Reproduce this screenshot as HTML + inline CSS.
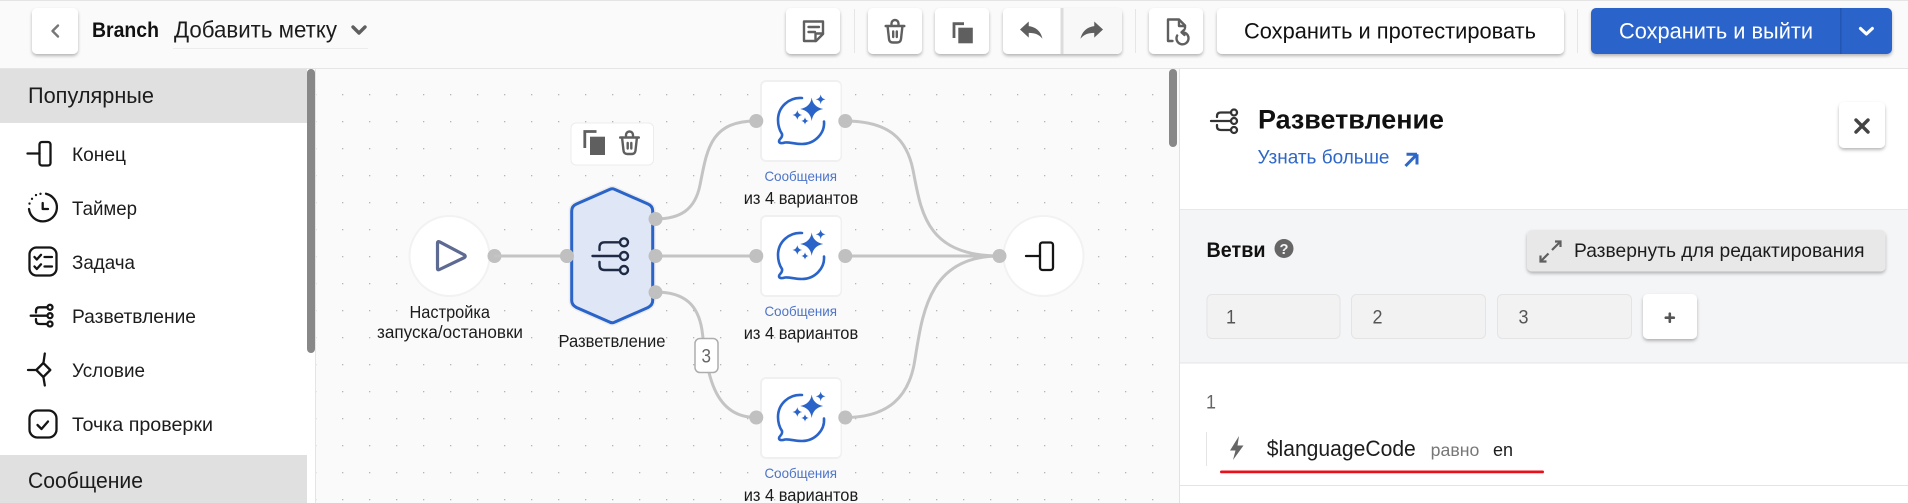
<!DOCTYPE html>
<html lang="ru"><head><meta charset="utf-8"><title>Branch</title>
<style>
html,body{margin:0;padding:0;background:#fff;width:1908px;height:503px;overflow:hidden}
svg{display:block}
text{font-family:"Liberation Sans",sans-serif;fill:#1c1c1c}
.b{font-weight:700}
.ic{fill:none;stroke:#5f5f5f;stroke-width:2.4;stroke-linecap:round;stroke-linejoin:round}
.bk{fill:none;stroke:#151515;stroke-width:2.3;stroke-linecap:round;stroke-linejoin:round}
.wire{fill:none;stroke:#c4c4c4;stroke-width:3}
.port{fill:#c0c0c0}
</style></head><body>
<svg xmlns="http://www.w3.org/2000/svg" width="1908" height="503" viewBox="0 0 1908 503">
<defs>
<pattern id="dots" x="342" y="94" width="27" height="27" patternUnits="userSpaceOnUse"><rect x="0" y="0" width="1.3" height="1.3" fill="#b5b5b5"/></pattern>
<filter id="sh" x="-20%" y="-20%" width="140%" height="150%"><feDropShadow dx="0" dy="2" stdDeviation="1.6" flood-color="#000" flood-opacity=".28"/></filter>
<g id="trash" class="ic"><path d="M6.5 5V4a3.5 3.5 0 0 1 7 0V5"/><path d="M.8 6.5H19.2" stroke-width="2.6"/><path d="M2.6 7L4 19.5Q4.4 23 8 23H12Q15.6 23 16 19.5L17.4 7"/><path d="M8.2 12V17.5M11.8 12V17.5"/></g>
<g id="chat">
<path d="M802 98C789 97 778 107 778 120C778 126 780 131 782 134C783 138 779 139 779 141C779 143.5 782 143.5 785 142.5C790 142 794 144 802 144C815 144 825 133 824 121.5" fill="none" stroke="#2b64c8" stroke-width="2.6" stroke-linecap="round" stroke-linejoin="round"/>
<path d="M811.7 97.5Q813 107 823.2 109Q813 111 811.7 121Q810.4 111 800.2 109Q810.4 107 811.7 97.5Z" fill="#2b64c8"/>
<path d="M820.7 94.5Q821.3 98.7 825.5 99.3Q821.3 100 820.7 104.2Q820 100 815.8 99.3Q820 98.7 820.7 94.5Z" fill="#2b64c8"/>
<path d="M797.3 110.2Q798 114.3 802.2 115Q798 115.7 797.3 119.8Q796.6 115.7 792.4 115Q796.6 114.3 797.3 110.2Z" fill="#2b64c8"/>
<path d="M805 117.3Q805.5 120.5 808.7 121Q805.5 121.5 805 124.7Q804.5 121.5 801.3 121Q804.5 120.5 805 117.3Z" fill="#2b64c8"/>
</g>
</defs>

<!-- base -->
<rect x="0" y="0" width="1908" height="503" fill="#fff"/>
<!-- header -->
<rect x="0" y="0" width="1908" height="68" fill="#fafafa"/>
<rect x="0" y="0" width="1908" height="1" fill="#e4e4e4"/>
<rect x="0" y="68" width="1908" height="1" fill="#e5e5e5"/>

<rect x="32" y="8" width="46" height="46" rx="5" fill="#fff" filter="url(#sh)"/>
<path d="M58 25.500L52.500 31L58 36.500" fill="none" stroke="#777" stroke-width="2.400" stroke-linecap="round" stroke-linejoin="round"/>
<text class="b" x="92" y="37" font-size="21.500" textLength="67" lengthAdjust="spacingAndGlyphs" style="fill:#111">Branch</text>
<text x="174" y="37.500" font-size="23" textLength="163" lengthAdjust="spacingAndGlyphs">Добавить метку</text>
<path d="M353 27L359 33L365 27" fill="none" stroke="#5f5f5f" stroke-width="3.400" stroke-linecap="round" stroke-linejoin="round"/>
<rect x="173" y="48" width="195" height="1" fill="#ececec"/>

<!-- toolbar -->
<rect x="786" y="8" width="54" height="46" rx="5" fill="#fff" filter="url(#sh)"/>
<path d="M804 21.500H823V34L816 41H804Z" class="ic" stroke-width="2.800"/>
<path d="M815.500 41V33.500H823" class="ic" stroke-width="2"/>
<path d="M808.500 27H819M808.500 32H815" class="ic"/>
<rect x="854" y="9" width="1" height="44" fill="#e6e6e6"/>
<rect x="868" y="8" width="54" height="46" rx="5" fill="#fff" filter="url(#sh)"/>
<use href="#trash" x="885" y="19.500"/>
<rect x="935" y="8" width="54" height="46" rx="5" fill="#fff" filter="url(#sh)"/>
<path d="M954 38V23.700H964" fill="none" stroke="#5f5f5f" stroke-width="2.800"/>
<rect x="958.300" y="27.700" width="14.500" height="15.600" fill="#5f5f5f"/>
<rect x="1003" y="8" width="119" height="46" rx="5" fill="#fff" filter="url(#sh)"/>
<path d="M1062 8H1117A5 5 0 0 1 1122 13V49A5 5 0 0 1 1117 54H1062Z" fill="#f8f8f8"/>
<rect x="1060.500" y="8" width="3" height="46" fill="#dcdcdc"/>
<path transform="translate(1016.250 15.750) scale(1.25 1.150)" d="M10 9V5l-7 7 7 7v-4.100c5 0 8.500 1.600 11 5.100-1-5-4-10-11-11z" fill="#5f5f5f"/>
<path transform="translate(1106.750 15.750) scale(-1.250 1.150)" d="M10 9V5l-7 7 7 7v-4.100c5 0 8.500 1.600 11 5.100-1-5-4-10-11-11z" fill="#5f5f5f"/>
<rect x="1135" y="9" width="1" height="44" fill="#e6e6e6"/>
<rect x="1149" y="8" width="54" height="46" rx="5" fill="#fff" filter="url(#sh)"/>
<path d="M1172.500 41H1168V19.500H1179L1185 25.500V28" class="ic" stroke-width="2.800"/>
<path d="M1179 20V26H1185" class="ic" stroke-width="1.800"/>
<path d="M1177.200 35.500A6 6 0 1 0 1182.700 32.300" class="ic" stroke-width="2.300"/>
<path d="M1184.500 29.500L1181.500 32.300L1184.500 35" class="ic" stroke-width="2"/>
<rect x="1217" y="8" width="347" height="46" rx="5" fill="#fff" filter="url(#sh)"/>
<text x="1244" y="38.500" font-size="22.500" textLength="292" lengthAdjust="spacingAndGlyphs" style="fill:#111">Сохранить и протестировать</text>
<rect x="1577" y="9" width="1" height="44" fill="#e6e6e6"/>
<rect x="1591" y="8" width="301" height="46" rx="5" fill="#2a63c9" filter="url(#sh)"/>
<rect x="1840" y="8" width="1.500" height="46" fill="#2356b2"/>
<text x="1619" y="38.500" font-size="22.500" textLength="194" lengthAdjust="spacingAndGlyphs" style="fill:#fff">Сохранить и выйти</text>
<path d="M1860.500 28.500L1866.400 34L1872.300 28.500" fill="none" stroke="#fff" stroke-width="3.200" stroke-linecap="round" stroke-linejoin="round"/>

<!-- sidebar -->
<rect x="0" y="69" width="307" height="54" fill="#e0e0e0"/>
<text x="28" y="103" font-size="22" textLength="126" lengthAdjust="spacingAndGlyphs">Популярные</text>
<rect x="307" y="69" width="8" height="284" rx="4" fill="#888"/>
<rect x="315" y="69" width="1" height="434" fill="#e5e5e5"/>

<path d="M27.500 153.500H39.500" class="bk"/><rect x="39.500" y="142" width="11" height="23.500" rx="2.500" class="bk"/>
<text x="72" y="161" font-size="19.500" textLength="54" lengthAdjust="spacingAndGlyphs">Конец</text>

<path d="M46 193.700A14 14 0 1 1 29 209" class="bk"/>
<path d="M29.500 203.500V203.600M32 198.800V198.900M36 195V195.100M40.500 193.800V193.900" class="bk"/>
<path d="M42.700 203V209H48" class="bk"/>
<text x="72" y="215" font-size="19.500" textLength="65" lengthAdjust="spacingAndGlyphs">Таймер</text>

<rect x="29.500" y="247.500" width="27" height="28" rx="7" class="bk"/>
<path d="M34.500 257L36.800 259.500L41 254.800M34.500 266.500L36.800 269L41 264.300M44.500 257H52M44.500 266.500H52" class="bk" stroke-width="2"/>
<text x="72" y="269" font-size="19.500" textLength="63" lengthAdjust="spacingAndGlyphs">Задача</text>

<circle cx="50" cy="307.300" r="2.500" class="bk" stroke-width="1.500"/><circle cx="50" cy="315.700" r="2.500" class="bk" stroke-width="1.500"/><circle cx="50" cy="324" r="2.500" class="bk" stroke-width="1.500"/>
<path d="M30.700 315.700H47.500M47.500 307.300H39.500Q36 307.300 36 311V312.500M36 319V320.500Q36 324 39.500 324H47.500" class="bk" stroke-width="1.500"/>
<text x="72" y="323" font-size="19.500" textLength="124" lengthAdjust="spacingAndGlyphs">Разветвление</text>

<path d="M43.300 363L50.300 370L43.300 377L36.300 370Z" class="bk"/>
<path d="M28 370H35.500M44.800 353.500L43.500 362.500M43.500 377.500L44.800 385.500" class="bk"/>
<text x="72" y="377" font-size="19.500" textLength="73" lengthAdjust="spacingAndGlyphs">Условие</text>

<rect x="29.500" y="410.500" width="27" height="27" rx="8" class="bk"/>
<path d="M37.500 425L41.500 429L48 421.500" class="bk"/>
<text x="72" y="431" font-size="19.500" textLength="141" lengthAdjust="spacingAndGlyphs">Точка проверки</text>

<rect x="0" y="455" width="307" height="48" fill="#e0e0e0"/>
<text x="28" y="488" font-size="22" textLength="115" lengthAdjust="spacingAndGlyphs">Сообщение</text>

<!-- canvas -->
<rect x="316" y="69" width="863" height="434" fill="#fafafa"/>
<rect x="316" y="69" width="850" height="434" fill="url(#dots)"/>
<rect x="1169" y="69" width="8" height="78" rx="4" fill="#888"/>

<!-- wires -->
<path class="wire" d="M655 219C680 219 695 210 700 185C707 150 710 121 756 121"/>
<path class="wire" d="M655 256H756"/>
<path class="wire" d="M655 292C685 292 698 305 702 330C707 370 712 417.500 756 417.500"/>
<path class="wire" d="M845 121C890 121 907 140 913 170C921 210 925 256 999 256"/>
<path class="wire" d="M845 256H999"/>
<path class="wire" d="M845 417.500C890 417.500 908 395 914 365C922 320 925 256 999 256"/>

<!-- start -->
<circle cx="449.500" cy="256" r="41" fill="#f2f2f2"/>
<circle cx="449.500" cy="256" r="39" fill="#fff"/>
<path d="M437.500 243V268.500Q437.500 270.500 439.500 269.500L464.500 257.500Q466 256.300 464.500 255L439.500 241.800Q437.500 241 437.500 243Z" fill="none" stroke="#5d6a91" stroke-width="3.200" stroke-linejoin="round"/>
<circle class="port" cx="494.500" cy="256" r="7"/>
<path class="wire" d="M494 256H567"/>
<circle class="port" cx="567" cy="256" r="7"/>
<text x="409.500" y="318" font-size="17.500" textLength="80.500" lengthAdjust="spacingAndGlyphs">Настройка</text>
<text x="377" y="338" font-size="17.500" textLength="146" lengthAdjust="spacingAndGlyphs">запуска/остановки</text>

<!-- hex toolbar -->
<rect x="571" y="123" width="82.500" height="42" rx="5" fill="#fff" stroke="#ececec"/>
<path d="M584.800 148V131.500H596.500" fill="none" stroke="#5f5f5f" stroke-width="2.800"/>
<rect x="590" y="136.700" width="15" height="18.300" fill="#5f5f5f"/>
<use href="#trash" x="619.500" y="131"/>

<!-- hexagon -->
<path d="M609.500 189.500Q612.300 188 615 189.500L648 204Q652.700 206 652.700 211V300.500Q652.700 305 648 307.500L615 322Q612.300 323.500 609.500 322L576.500 307.500Q571.700 305 571.700 300.500V211Q571.700 206 576.500 204Z" fill="#dfe7f7" stroke="#ececec" stroke-width="6"/>
<path d="M609.500 189.500Q612.300 188 615 189.500L648 204Q652.700 206 652.700 211V300.500Q652.700 305 648 307.500L615 322Q612.300 323.500 609.500 322L576.500 307.500Q571.700 305 571.700 300.500V211Q571.700 206 576.500 204Z" fill="#dfe7f7" stroke="#2b64c8" stroke-width="3"/>
<circle class="port" cx="567" cy="256" r="7"/>
<path d="M592.500 256H620M620 242.300H604.500Q599.500 242.300 599.500 247.500V250M599.500 262V265Q599.500 270 604.500 270H620" fill="none" stroke="#1f2a44" stroke-width="2.400" stroke-linecap="round"/>
<circle cx="624" cy="242.300" r="4" fill="#dfe7f7" stroke="#1f2a44" stroke-width="2.400"/>
<circle cx="624" cy="256" r="4" fill="#dfe7f7" stroke="#1f2a44" stroke-width="2.400"/>
<circle cx="624" cy="270" r="4" fill="#dfe7f7" stroke="#1f2a44" stroke-width="2.400"/>
<circle class="port" cx="655.500" cy="219" r="7"/>
<circle class="port" cx="655.500" cy="256" r="7"/>
<circle class="port" cx="655.500" cy="292.300" r="7"/>
<text x="558.500" y="347" font-size="17.500" textLength="107" lengthAdjust="spacingAndGlyphs">Разветвление</text>

<!-- label 3 -->
<rect x="695" y="338.500" width="23" height="34" rx="5" fill="#fff" stroke="#adadad" stroke-width="1.500"/>
<text x="701.500" y="362.500" font-size="19.500" textLength="9.500" lengthAdjust="spacingAndGlyphs" style="fill:#666">3</text>

<!-- message nodes -->
<rect x="760" y="80" width="82" height="82" rx="6" fill="#f0f0f0"/>
<rect x="762" y="82" width="78.500" height="78" rx="4" fill="#fff"/>
<use href="#chat"/>
<circle class="port" cx="756.300" cy="121" r="7"/><circle class="port" cx="845.300" cy="121" r="7"/>
<text x="764.500" y="181" font-size="14" textLength="72.500" lengthAdjust="spacingAndGlyphs" style="fill:#4d75c9">Сообщения</text>
<text x="743.700" y="204" font-size="17.500" textLength="114.500" lengthAdjust="spacingAndGlyphs">из 4 вариантов</text>

<rect x="760" y="215" width="82" height="82" rx="6" fill="#f0f0f0"/>
<rect x="762" y="217" width="78.500" height="78" rx="4" fill="#fff"/>
<use href="#chat" y="135"/>
<circle class="port" cx="756.300" cy="256" r="7"/><circle class="port" cx="845.300" cy="256" r="7"/>
<text x="764.500" y="316" font-size="14" textLength="72.500" lengthAdjust="spacingAndGlyphs" style="fill:#4d75c9">Сообщения</text>
<text x="743.700" y="339" font-size="17.500" textLength="114.500" lengthAdjust="spacingAndGlyphs">из 4 вариантов</text>

<rect x="760" y="377" width="82" height="82" rx="6" fill="#f0f0f0"/>
<rect x="762" y="379" width="78.500" height="78" rx="4" fill="#fff"/>
<use href="#chat" y="297"/>
<circle class="port" cx="756.300" cy="417.500" r="7"/><circle class="port" cx="845.300" cy="417.500" r="7"/>
<text x="764.500" y="478" font-size="14" textLength="72.500" lengthAdjust="spacingAndGlyphs" style="fill:#4d75c9">Сообщения</text>
<text x="743.700" y="501" font-size="17.500" textLength="114.500" lengthAdjust="spacingAndGlyphs">из 4 вариантов</text>

<!-- end node -->
<circle cx="1043.500" cy="256" r="41" fill="#f2f2f2"/>
<circle cx="1043.500" cy="256" r="39" fill="#fff"/>
<path d="M1026 256H1040" class="bk" stroke-width="2.600"/>
<rect x="1040" y="242.500" width="13" height="27.500" rx="2.500" class="bk" stroke-width="2.600"/>
<circle class="port" cx="999.500" cy="256" r="7"/>

<!-- right panel -->
<rect x="1179" y="69" width="729" height="434" fill="#fff"/>
<rect x="1179" y="69" width="1" height="434" fill="#e2e2e2"/>
<circle cx="1234" cy="112.500" r="3" class="bk" stroke-width="1.500" style="stroke:#333"/>
<circle cx="1234" cy="121" r="3" class="bk" stroke-width="1.500" style="stroke:#333"/>
<circle cx="1234" cy="130" r="3" class="bk" stroke-width="1.500" style="stroke:#333"/>
<path d="M1211 121H1231M1231 112.500H1221Q1217 112.500 1217 116V117M1217 125V126.500Q1217 130 1221 130H1231" class="bk" stroke-width="1.500" style="stroke:#333"/>
<text class="b" x="1258" y="128.500" font-size="26.500" textLength="186" lengthAdjust="spacingAndGlyphs" style="fill:#111">Разветвление</text>
<text x="1257.500" y="163.500" font-size="19.500" textLength="132" lengthAdjust="spacingAndGlyphs" style="fill:#2f67c6">Узнать больше</text>
<path d="M1406.500 154.300H1417M1417 154.300V164.500M1417 154.300L1405.500 166" fill="none" stroke="#2f67c6" stroke-width="3"/>
<rect x="1839" y="102" width="46" height="46" rx="5" fill="#fff" filter="url(#sh)"/>
<path d="M1856 120L1868 132M1868 120L1856 132" fill="none" stroke="#444" stroke-width="3.400" stroke-linecap="round"/>

<rect x="1180" y="209" width="728" height="154" fill="#f4f5f7"/>
<rect x="1180" y="209" width="728" height="1" fill="#e8e8e8"/>
<rect x="1180" y="362.500" width="728" height="1" fill="#e4e4e4"/>
<text class="b" x="1206.500" y="257" font-size="21.500" textLength="59" lengthAdjust="spacingAndGlyphs" style="fill:#111">Ветви</text>
<circle cx="1284" cy="248.500" r="9.500" fill="#666"/>
<text class="b" x="1279.500" y="254" font-size="15" textLength="9" lengthAdjust="spacingAndGlyphs" style="fill:#f4f5f7">?</text>

<rect x="1527" y="230" width="358.500" height="41.500" rx="5" fill="#e8e8e8" filter="url(#sh)"/>
<path d="M1552 250L1560 242M1555 241.500H1560.500V247M1548.500 253.500L1541 261M1540.500 255.500V261.500H1546.500" fill="none" stroke="#5f5f5f" stroke-width="2.200"/>
<text x="1574" y="257" font-size="19.500" textLength="290.500" lengthAdjust="spacingAndGlyphs">Развернуть для редактирования</text>

<rect x="1207" y="294.500" width="133" height="44" rx="5" fill="#f2f2f2" stroke="#e4e4e4"/>
<rect x="1351.500" y="294.500" width="134" height="44" rx="5" fill="#f2f2f2" stroke="#e4e4e4"/>
<rect x="1497.500" y="294.500" width="134" height="44" rx="5" fill="#f2f2f2" stroke="#e4e4e4"/>
<text x="1226" y="323.500" font-size="19.500" textLength="10" lengthAdjust="spacingAndGlyphs" style="fill:#555">1</text>
<text x="1372.500" y="323.500" font-size="19.500" textLength="10" lengthAdjust="spacingAndGlyphs" style="fill:#555">2</text>
<text x="1518.500" y="323.500" font-size="19.500" textLength="10" lengthAdjust="spacingAndGlyphs" style="fill:#555">3</text>
<rect x="1643" y="294" width="54" height="45" rx="5" fill="#fff" filter="url(#sh)"/>
<path d="M1665.800 317.700H1673.800M1669.800 313.700V321.700" fill="none" stroke="#555" stroke-width="2.600" stroke-linecap="round"/>

<text x="1206" y="408.500" font-size="19.500" textLength="10" lengthAdjust="spacingAndGlyphs" style="fill:#666">1</text>
<rect x="1206" y="432" width="1" height="34" fill="#e4e4e4"/>
<path d="M1239 436L1230 450.500H1235.500L1233 460L1243.500 445.500H1237.500Z" fill="#666"/>
<text x="1266.800" y="456" font-size="22" textLength="149" lengthAdjust="spacingAndGlyphs">$languageCode</text>
<text x="1430.700" y="456" font-size="17.500" textLength="48.700" lengthAdjust="spacingAndGlyphs" style="fill:#777">равно</text>
<text x="1493" y="456" font-size="18" textLength="20" lengthAdjust="spacingAndGlyphs">en</text>
<rect x="1220" y="470.500" width="324" height="2.800" rx="1.400" fill="#e8101a"/>
<rect x="1180" y="485" width="728" height="1" fill="#e4e4e4"/>
</svg>
</body></html>
